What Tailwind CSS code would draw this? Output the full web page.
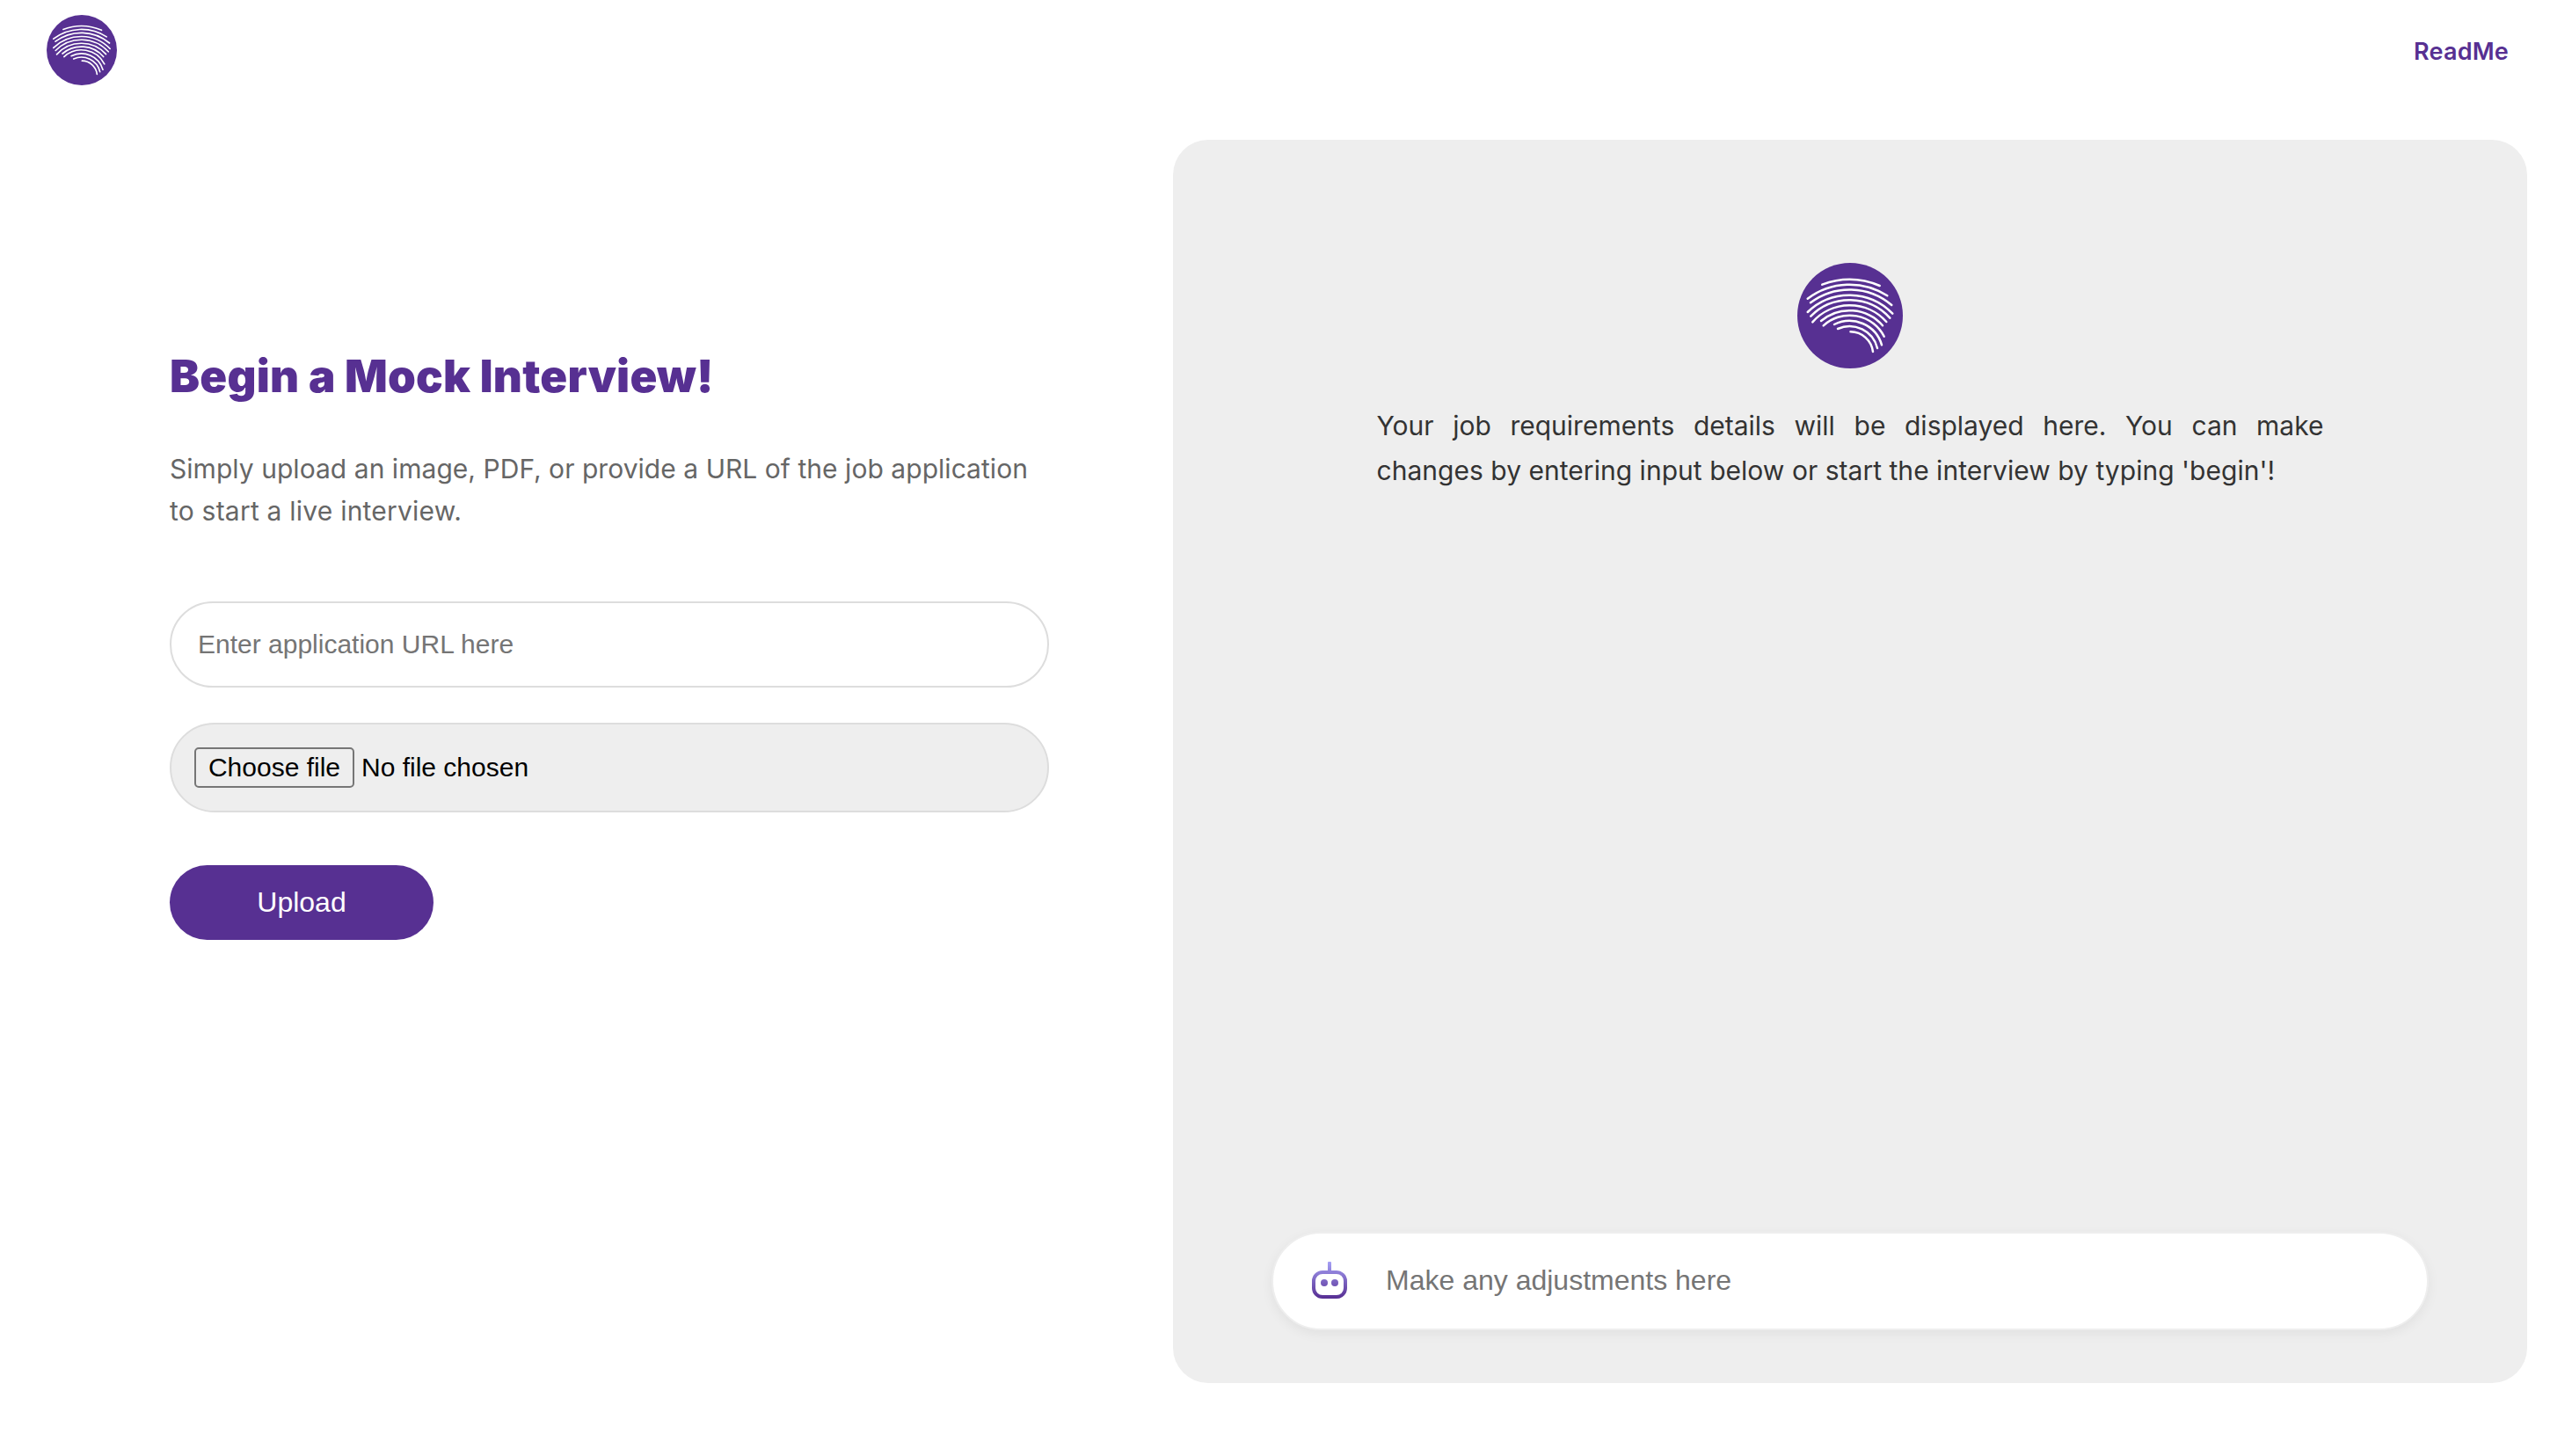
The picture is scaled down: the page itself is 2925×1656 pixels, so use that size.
<!DOCTYPE html>
<html lang="en">
<head>
<meta charset="utf-8">
<title>Mock Interview</title>
<script src="https://cdn.jsdelivr.net/npm/@tailwindcss/browser@4"></script>
</head>
<body class="bg-white font-['Inter',sans-serif]">
<svg class="hidden">
  <symbol id="logo" viewBox="0 0 120 120">
    <circle cx="60" cy="60" r="60" fill="#573092"/>
    <g fill="none" stroke="#fff" stroke-width="2.5" stroke-linecap="round">
      <path d="M28.300 24.700A88 88 0 0 1 93.700 26"/>
      <path d="M11.700 40.700A79 79 0 0 1 102.300 37.300"/>
      <path d="M15 45.300A74 74 0 0 1 107.300 48"/>
      <path d="M11.700 56A68 68 0 0 1 108.300 57.700"/>
      <path d="M15.300 60.700A62 62 0 0 1 105.300 62.700"/>
      <path d="M17.300 67.300A56.300 56.300 0 0 1 101.300 67"/>
      <path d="M27 66A50 50 0 0 1 97 71.300"/>
      <path d="M29.700 71.300A44 44 0 0 1 98.700 83.700"/>
      <path d="M42 70A38.300 38.300 0 0 1 96 93.300"/>
      <path d="M46 75A32.500 32.500 0 0 1 91 97"/>
      <path d="M60.500 78.300A26 26 0 0 1 86 101"/>
    </g>
  </symbol>
</svg>
<div class="flex h-[1656px] w-[2925px] flex-col overflow-hidden">
  <header class="flex h-[159px] shrink-0 items-start justify-between pt-[17px] pr-[72px] pl-[53px]">
    <svg class="size-20"><use href="#logo"/></svg>
    <a class="mt-[22px] text-[27px] leading-10 font-semibold tracking-[0.2px] text-[#573092]">ReadMe</a>
  </header>
  <main class="flex">
    <section class="w-[1334px] pt-[234px] pl-[193px]">
      <h1 class="text-[51px] leading-[69px] font-black tracking-[0.25px] whitespace-nowrap text-[#573092]">Begin a Mock Interview!</h1>
      <p class="mt-[47px] text-[30px] leading-12 whitespace-nowrap text-[#666]"><span class="tracking-[0.04px]">Simply upload an image, PDF, or provide a URL of the job application</span><br><span class="tracking-[0.22px]">to start a live interview.</span></p>
      <form class="mt-[79px] flex w-[1000px] flex-col font-['Liberation_Sans',sans-serif] text-[30px]">
        <input class="h-[98px] rounded-full border-2 border-[#ddd] px-[30px] placeholder:text-[#757575]" placeholder="Enter application URL here">
        <div class="mt-10 flex h-[102px] items-center gap-2 rounded-full border-2 border-[#ddd] bg-[#eee] pl-[26px] text-black">
          <button type="button" class="h-[46px] w-[182px] rounded-[5px] border-2 border-[#767676] leading-[42px]">Choose file</button>
          <span class="pb-0.5">No file chosen</span>
        </div>
        <button type="button" class="mt-[60px] h-[85px] w-[300px] rounded-full bg-[#573092] pb-0.5 text-[32px] text-white">Upload</button>
      </form>
    </section>
    <section class="flex h-[1414px] w-[1540px] flex-col items-center rounded-[40px] bg-[#eee] pt-[140px] pb-[60px]">
      <svg class="size-[120px]"><use href="#logo"/></svg>
      <p class="mt-[40px] w-[1077px] text-[30px] leading-[51px] text-[#333]"><span class="block [text-align-last:justify]">Your job requirements details will be displayed here. You can make</span><span class="block tracking-[0.03px] whitespace-nowrap">changes by entering input below or start the interview by typing 'begin'!</span></p>
      <div class="mt-auto flex h-[112px] w-[1316px] items-center rounded-full border-2 border-[#eee] bg-white pl-[44px] shadow-[0_4px_14px_rgba(0,0,0,0.06)]">
        <svg class="h-[44px] w-[40px]" viewBox="0 0 40 44" fill="none">
          <defs><linearGradient id="bot" x1="0" y1="0" x2="0" y2="43" gradientUnits="userSpaceOnUse"><stop stop-color="#a5a0f5"/><stop offset="1" stop-color="#552b90"/></linearGradient></defs>
          <rect x="18" y="0" width="4" height="12" rx="1" fill="url(#bot)"/>
          <rect x="2" y="12" width="36" height="28" rx="10" stroke="url(#bot)" stroke-width="4"/>
          <circle cx="14" cy="24" r="4" fill="url(#bot)"/><circle cx="26" cy="24" r="4" fill="url(#bot)"/>
        </svg>
        <input class="ml-[43px] w-[1000px] pb-0.5 pl-px font-['Liberation_Sans',sans-serif] text-[32px] placeholder:text-[#757575]" placeholder="Make any adjustments here">
      </div>
    </section>
  </main>
</div>
</body>
</html>
